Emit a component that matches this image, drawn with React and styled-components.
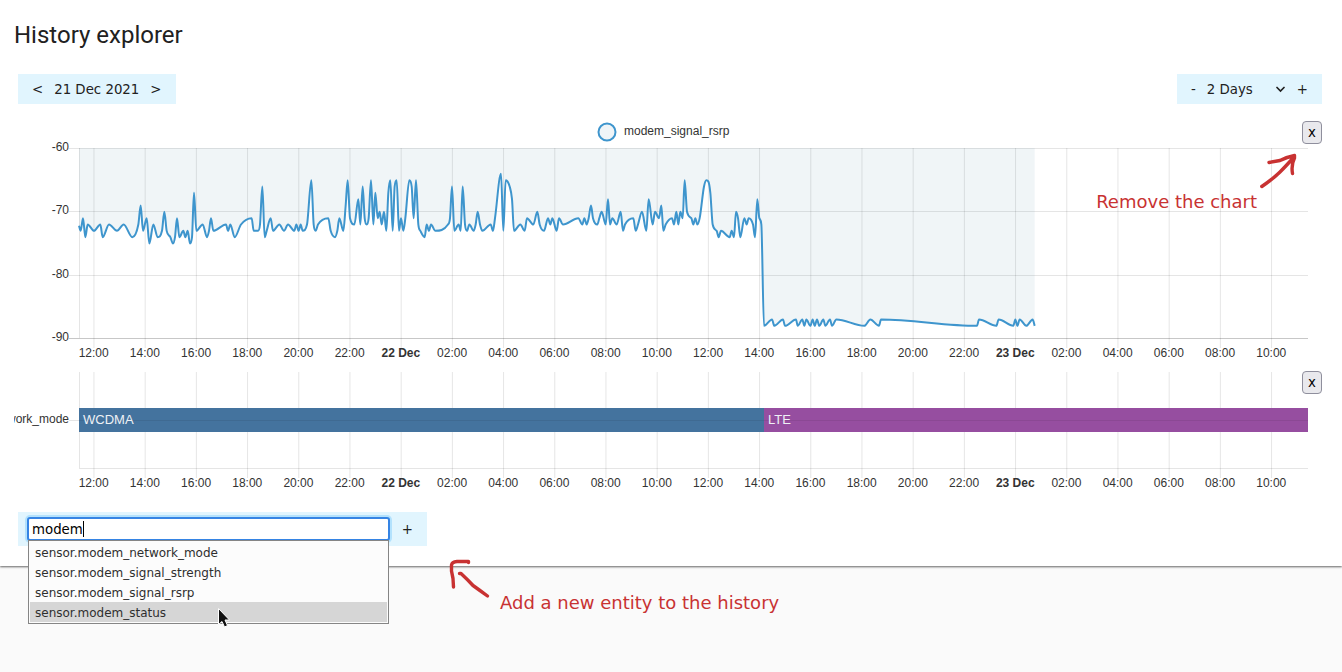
import React, { useLayoutEffect, useRef, useState } from 'react';
import styled, { createGlobalStyle } from 'styled-components';

const UI_FONT = '"DejaVu Sans", sans-serif';
const CHART_FONT = '"Liberation Sans", Arial, sans-serif';

const GlobalStyle = createGlobalStyle`
  * { box-sizing: border-box; }
  body {
    margin: 0;
    background: #fafafa;
    color: #212121;
    font-family: ${UI_FONT};
  }
`;

const Page = styled.div`
  position: relative;
  min-height: 100vh;
  overflow: hidden;
`;

const Card = styled.main`
  padding-bottom: 20px;
  background: #fff;
  box-shadow: 0 1px 2px rgba(0, 0, 0, 0.6);
`;

const Title = styled.h1`
  margin: 0;
  padding: 19px 14px 23px;
  font: 400 24px/32px Roboto, sans-serif;
`;

const Toolbar = styled.div`
  display: flex;
  justify-content: space-between;
  padding: 0 20px 0 18px;
`;

const ControlGroup = styled.div`
  display: flex;
  align-items: center;
  gap: 11px;
  height: 30px;
  padding: 0 14px;
  background: #e1f5fe;
`;

const FlatButton = styled.button`
  padding: 2px 0 0;
  border: 0;
  background: transparent;
  color: #212121;
  font-family: ${UI_FONT};
  line-height: 16px;
  white-space: nowrap;
`;

const SelectWrap = styled.div`
  position: relative;
  width: 79px;
`;

const RangeSelect = styled.select`
  display: block;
  width: 100%;
  padding: 2px 0 0;
  border: 0;
  appearance: none;
  background: transparent;
  color: #212121;
  font-family: ${UI_FONT};
  line-height: 16px;
`;

const Chevron = styled.svg`
  position: absolute;
  top: 6px;
  right: 1px;
  pointer-events: none;
`;

const Charts = styled.div`
  padding-top: 16px;
`;

const ChartSection = styled.section`
  position: relative;
  height: ${(p) => p.$height}px;
  padding: 0 34px 0 14px;
`;

const ChartSvg = styled.svg`
  display: block;
  width: 100%;
  height: 100%;
  overflow: hidden;
  font-family: ${CHART_FONT};
  font-size: 12px;
  fill: #333;
`;

const CloseButton = styled.button`
  position: absolute;
  top: 1px;
  right: 20px;
  width: 20px;
  height: 23px;
  padding: 0;
  border: 1px solid #8f8f9d;
  border-radius: 4px;
  background: #e9e9ed;
  color: #000;
  font-family: ${UI_FONT};
`;

const EntityBar = styled.div`
  position: relative;
  display: flex;
  align-items: center;
  justify-content: space-between;
  width: 409px;
  height: 34px;
  margin: 12px 0 0 18px;
  padding: 0 14px 0 9px;
  background: #e1f5fe;
`;

const EntityField = styled.div`
  position: relative;
  width: 363px;
`;

const EntityInput = styled.input`
  display: block;
  width: 100%;
  height: 24px;
  padding: 0 3px;
  border: 2px solid #3584e4;
  border-radius: 3px;
  outline: 0;
  box-shadow: 0 0 0 2px #b3e2fd;
  background: #fff;
  color: #000;
  font-family: ${UI_FONT};
`;

const Caret = styled.span`
  position: absolute;
  top: 4px;
  left: 56px;
  width: 1px;
  height: 16px;
  background: #000;
`;

const Suggestions = styled.ul`
  position: absolute;
  z-index: 2;
  top: 23px;
  left: 1px;
  right: 1px;
  margin: 0;
  padding: 1px;
  border: 1px solid #858585;
  background: #fcfcfc;
  list-style: none;
`;

const Suggestion = styled.li`
  padding: 2px 5px 0;
  background: ${(p) => (p.$active ? '#d6d6d6' : 'transparent')};
  color: #2e2e2e;
  font-size: 12px;
  line-height: 18px;
`;

const Cursor = styled.svg`
  position: absolute;
  z-index: 3;
  top: 90px;
  left: 190px;
`;

const Note = styled.div`
  position: absolute;
  color: #c83232;
  font-size: 18px;
  line-height: 24px;
  white-space: nowrap;
`;

const RemoveNote = styled(Note)`
  top: 70px;
  right: 85px;
`;

const AddNote = styled(Note)`
  top: 79px;
  left: 482px;
`;

const Arrow = styled.svg`
  position: absolute;
  fill: none;
  stroke: #c83232;
  stroke-linecap: round;
  stroke-linejoin: round;
`;

const RemoveArrow = styled(Arrow)`
  top: 30px;
  right: 42px;
`;

const AddArrow = styled(Arrow)`
  top: 44px;
  left: 430px;
`;

/* The 48-hour window is divided into 3687 ticks. */
const WINDOW_TICKS = 3687;
const FIRST_LABEL_TICK = 44;
const TICKS_PER_LABEL = 153.6;
const MODE_CHANGE_TICK = 2055;

const TIME_LABELS = [
  '12:00', '14:00', '16:00', '18:00', '20:00', '22:00', '22 Dec', '02:00',
  '04:00', '06:00', '08:00', '10:00', '12:00', '14:00', '16:00', '18:00',
  '20:00', '22:00', '23 Dec', '02:00', '04:00', '06:00', '08:00', '10:00',
];

/* Recorded blocks: starting tick, then [tick in block, dBm] samples. */
const BLOCKS = [
  [-118, [
    [118, -72.2], [123, -73], [130, -71], [137, -74], [144, -72], [163, -73], [182, -72], [189, -74],
    [208, -72], [232, -73], [252, -72], [278, -74], [296, -72], [303, -69], [310, -73], [321, -71],
    [329, -75], [341, -72], [354, -74], [367, -73], [374, -70], [381, -73], [392, -74], [400, -75],
    [406, -74], [412, -71], [419, -74], [431, -73], [437, -74], [444, -73], [451, -75], [457, -74],
    [463, -67], [470, -73], [489, -72], [502, -74], [508, -73], [514, -71], [521, -73], [559, -72],
    [565, -73], [572, -72], [585, -74], [604, -72], [636, -71], [642, -73], [655, -73], [661, -72],
    [668, -66], [675, -74], [681, -73], [693, -71], [700, -73], [719, -72], [733, -73], [745, -72],
    [764, -73], [770, -72], [777, -73], [783, -72],
  ]],
  [632, [
    [39, -73], [52, -72], [65, -65], [72, -72], [78, -73], [85, -72], [116, -71], [123, -73],
    [136, -74], [143, -73], [149, -71], [161, -73], [168, -69], [174, -65], [181, -71], [194, -72],
    [206, -68], [212, -72], [219, -66], [225, -71], [231, -72], [237, -71], [244, -65], [251, -72],
    [257, -67], [264, -71], [270, -70], [276, -72], [283, -70], [290, -73], [296, -67], [302, -65],
    [309, -73], [315, -66], [321, -65], [328, -73], [334, -71], [341, -73], [347, -71], [359, -65],
    [366, -66], [372, -71], [379, -65], [386, -72], [392, -73], [405, -74], [411, -72], [418, -73],
    [424, -72], [437, -73], [475, -72], [481, -71], [487, -66], [494, -73], [507, -72], [513, -73],
    [519, -66], [526, -72], [532, -73], [539, -72], [552, -73], [558, -72], [564, -70], [571, -72],
    [578, -73], [603, -72], [610, -73], [616, -71], [634, -64], [641, -73], [648, -65], [660, -66],
    [667, -68], [673, -73], [692, -72], [705, -73], [712, -71], [731, -72], [743, -70], [750, -72],
    [763, -73], [775, -71], [782, -72], [788, -71], [801, -73], [808, -71], [820, -72],
  ]],
  [1442, [
    [56, -71], [68, -72], [74, -71], [81, -72], [87, -71], [94, -69], [100, -71], [113, -72],
    [119, -71], [126, -70], [138, -72], [145, -68], [151, -72], [158, -71], [171, -72], [183, -70],
    [190, -73], [196, -72], [221, -71], [228, -73], [235, -72], [247, -70], [260, -73], [267, -68],
    [279, -72], [286, -70], [298, -71], [305, -69], [311, -73], [318, -72], [337, -71], [343, -72],
    [350, -70], [356, -72], [362, -70], [369, -71], [375, -65], [382, -70], [395, -71], [401, -72],
    [407, -71], [413, -72], [420, -71], [433, -66], [440, -65], [446, -65.2], [452, -67], [459, -72],
    [471, -73], [477, -74], [484, -73], [510, -74], [516, -73], [523, -74], [529, -70], [535, -71],
    [542, -74], [554, -71], [561, -72], [567, -71], [580, -72], [586, -74], [593, -68], [599, -71],
    [605, -72],
  ]],
  [1982, [
    [73, -88], [97, -87], [104, -88], [130, -87], [136, -88], [169, -87], [174, -88], [188, -87],
    [194, -88], [200, -87], [212, -88], [219, -87], [225, -88], [232, -87], [239, -88], [251, -87],
    [257, -88], [271, -87], [277, -88], [290, -87], [374, -88], [392, -87], [418, -88], [424, -87],
    [712, -88], [718, -87], [770, -88], [777, -87], [821, -88], [827, -87], [833, -88], [840, -87],
    [860, -88], [879, -87], [885, -88],
  ]],
];

const SAMPLES = BLOCKS.flatMap(([start, points]) =>
  points.map(([tick, dbm]) => [start + tick, dbm]),
);

const ENTITIES = [
  'sensor.modem_network_mode',
  'sensor.modem_signal_strength',
  'sensor.modem_signal_rsrp',
  'sensor.modem_status',
];

const PLOT_LEFT = 65;

/* Monotone cubic interpolation through the given pixel points. */
function monotonePath(pts) {
  const n = pts.length;
  const slope = [];
  for (let i = 0; i < n - 1; i += 1) {
    slope.push((pts[i + 1][1] - pts[i][1]) / (pts[i + 1][0] - pts[i][0]));
  }
  const m = pts.map((_, i) => {
    if (i === 0) return slope[0];
    if (i === n - 1) return slope[n - 2];
    return slope[i - 1] * slope[i] <= 0 ? 0 : (slope[i - 1] + slope[i]) / 2;
  });
  for (let i = 0; i < n - 1; i += 1) {
    if (slope[i] === 0) {
      m[i] = 0;
      m[i + 1] = 0;
    } else {
      const a = m[i] / slope[i];
      const b = m[i + 1] / slope[i];
      const len = a * a + b * b;
      if (len > 9) {
        const t = 3 / Math.sqrt(len);
        m[i] = a * t * slope[i];
        m[i + 1] = b * t * slope[i];
      }
    }
  }
  let d = `M${pts[0][0]} ${pts[0][1]}`;
  for (let i = 0; i < n - 1; i += 1) {
    const [x0, y0] = pts[i];
    const [x1, y1] = pts[i + 1];
    const h = (x1 - x0) / 3;
    d += `C${x0 + h} ${y0 + m[i] * h} ${x1 - h} ${y1 - m[i + 1] * h} ${x1} ${y1}`;
  }
  return d;
}

function useWidth(initial) {
  const ref = useRef(null);
  const [width, setWidth] = useState(initial);
  useLayoutEffect(() => {
    const measure = () => setWidth(ref.current.getBoundingClientRect().width);
    measure();
    window.addEventListener('resize', measure);
    return () => window.removeEventListener('resize', measure);
  }, []);
  return [ref, width];
}

const scaleX = (width) => (tick) =>
  PLOT_LEFT + (tick / WINDOW_TICKS) * (width - PLOT_LEFT);

function TimeAxis({ x, top, bottom, baseline }) {
  return (
    <g>
      <line x1={PLOT_LEFT + 0.5} x2={PLOT_LEFT + 0.5} y1={top} y2={bottom} stroke="rgba(0,0,0,0.1)" />
      {TIME_LABELS.map((label, i) => {
        const pos = x(FIRST_LABEL_TICK + i * TICKS_PER_LABEL);
        return (
          <g key={i}>
            <line x1={pos + 0.3} x2={pos + 0.3} y1={top} y2={bottom + 10} stroke="rgba(0,0,0,0.1)" />
            <text x={pos} y={baseline} textAnchor="middle" fontWeight={label.endsWith('Dec') ? 700 : 400}>
              {label}
            </text>
          </g>
        );
      })}
    </g>
  );
}

function SignalChart() {
  const [ref, width] = useWidth(1294);
  const x = scaleX(width);
  const y = (dbm) => 28.5 + (-60 - dbm) * (19 / 3);
  const pts = SAMPLES.map(([tick, dbm]) => [x(tick), y(dbm)]);
  const line = monotonePath(pts);
  const right = pts[pts.length - 1][0];
  const middle = width / 2;
  return (
    <ChartSvg ref={ref} role="img" aria-label="modem_signal_rsrp">
      <circle cx={middle - 54} cy="12" r="8.5" fill="#eff4f7" stroke="#3e95cd" strokeWidth="2" />
      <text x={middle - 37} y="15">modem_signal_rsrp</text>
      {[-60, -70, -80, -90].map((v) => (
        <g key={v}>
          <line
            x1={PLOT_LEFT - 10}
            x2={width}
            y1={Math.floor(y(v)) + 0.5}
            y2={Math.floor(y(v)) + 0.5}
            stroke={v === -90 ? 'rgba(0,0,0,0.22)' : 'rgba(0,0,0,0.1)'}
          />
          <text x={PLOT_LEFT - 10} y={Math.floor(y(v)) + 3} textAnchor="end">{v}</text>
        </g>
      ))}
      <TimeAxis x={x} top={28} bottom={218} baseline={237} />
      <path d={`${line}L${right} 28L${pts[0][0]} 28Z`} fill="rgba(66,122,158,0.08)" />
      <path d={line} fill="none" stroke="#3e95cd" strokeWidth="2" strokeLinejoin="round" />
    </ChartSvg>
  );
}

function ModeChart() {
  const [ref, width] = useWidth(1294);
  const x = scaleX(width);
  const split = x(MODE_CHANGE_TICK);
  return (
    <ChartSvg ref={ref} role="img" aria-label="modem_network_mode">
      <TimeAxis x={x} top={2} bottom={98} baseline={117} />
      <line x1={PLOT_LEFT} x2={width} y1="98.5" y2="98.5" stroke="rgba(0,0,0,0.1)" />
      <line x1={PLOT_LEFT - 10} x2={PLOT_LEFT} y1="50.5" y2="50.5" stroke="rgba(0,0,0,0.1)" />
      <text x={PLOT_LEFT - 10} y="53" textAnchor="end">modem_network_mode</text>
      <rect x={PLOT_LEFT} y="38" width={split - PLOT_LEFT} height="24" fill="#44739e" />
      <rect x={split} y="38" width={width - split} height="24" fill="#964ea0" />
      <line x1={PLOT_LEFT} x2={width} y1="50.5" y2="50.5" stroke="rgba(0,0,0,0.07)" />
      <g fill="#eef1f5" fontSize="13">
        <text x={PLOT_LEFT + 4} y="54">WCDMA</text>
        <text x={split + 4} y="54">LTE</text>
      </g>
    </ChartSvg>
  );
}

export default function App() {
  const [query, setQuery] = useState('modem');
  return (
    <Page>
      <GlobalStyle />
      <Card>
        <Title>History explorer</Title>
        <Toolbar>
          <ControlGroup>
            <FlatButton aria-label="Previous day">&lt;</FlatButton>
            <FlatButton>21 Dec 2021</FlatButton>
            <FlatButton aria-label="Next day">&gt;</FlatButton>
          </ControlGroup>
          <ControlGroup>
            <FlatButton aria-label="Shorter range">-</FlatButton>
            <SelectWrap>
              <RangeSelect aria-label="Time range" defaultValue="2">
                <option value="1">1 Day</option>
                <option value="2">2 Days</option>
                <option value="3">3 Days</option>
              </RangeSelect>
              <Chevron width="9" height="7" viewBox="0 0 9 7" fill="none" stroke="#212121" strokeWidth="1.7" strokeLinecap="round">
                <path d="M1 1.5l3.5 3.5L8 1.5" />
              </Chevron>
            </SelectWrap>
            <FlatButton aria-label="Longer range">+</FlatButton>
          </ControlGroup>
        </Toolbar>
        <Charts>
          <ChartSection $height={250}>
            <SignalChart />
            <CloseButton aria-label="Remove modem_signal_rsrp">x</CloseButton>
            <RemoveNote>Remove the chart</RemoveNote>
            <RemoveArrow width="40" height="42" viewBox="0 0 40 42" strokeWidth="3.4">
              <path d="M1.800 36.500Q14 28 20 22Q26 16 34 7M9 12.500L20 10.500Q27 7 34.500 5.500V8Q31 15 32.500 23.500" />
            </RemoveArrow>
          </ChartSection>
          <ChartSection $height={130}>
            <ModeChart />
            <CloseButton aria-label="Remove modem_network_mode">x</CloseButton>
          </ChartSection>
        </Charts>
        <EntityBar>
          <EntityField>
            <EntityInput
              aria-label="Entity"
              value={query}
              onChange={(e) => setQuery(e.target.value)}
            />
            <Caret />
            <Suggestions>
              {ENTITIES.map((name) => (
                <Suggestion key={name} $active={name === 'sensor.modem_status'}>{name}</Suggestion>
              ))}
            </Suggestions>
            <Cursor width="14" height="21" viewBox="0 0 14 21">
              <path d="M1.500 1.500V17.500L5 14.500L7.500 20L10.500 18.500L8 13H12.500Z" fill="#111" stroke="#fff" />
            </Cursor>
          </EntityField>
          <FlatButton aria-label="Add entity">+</FlatButton>
          <AddNote>Add a new entity to the history</AddNote>
          <AddArrow width="44" height="44" viewBox="0 0 44 44" strokeWidth="3.4">
            <path d="M20.500 6.500V5.500H9Q4 6 3.500 9V15Q5.500 22 5.500 31M11.500 17.500H13Q20 24 25 29.500Q32 34.500 39.500 40" />
          </AddArrow>
        </EntityBar>
      </Card>
    </Page>
  );
}
